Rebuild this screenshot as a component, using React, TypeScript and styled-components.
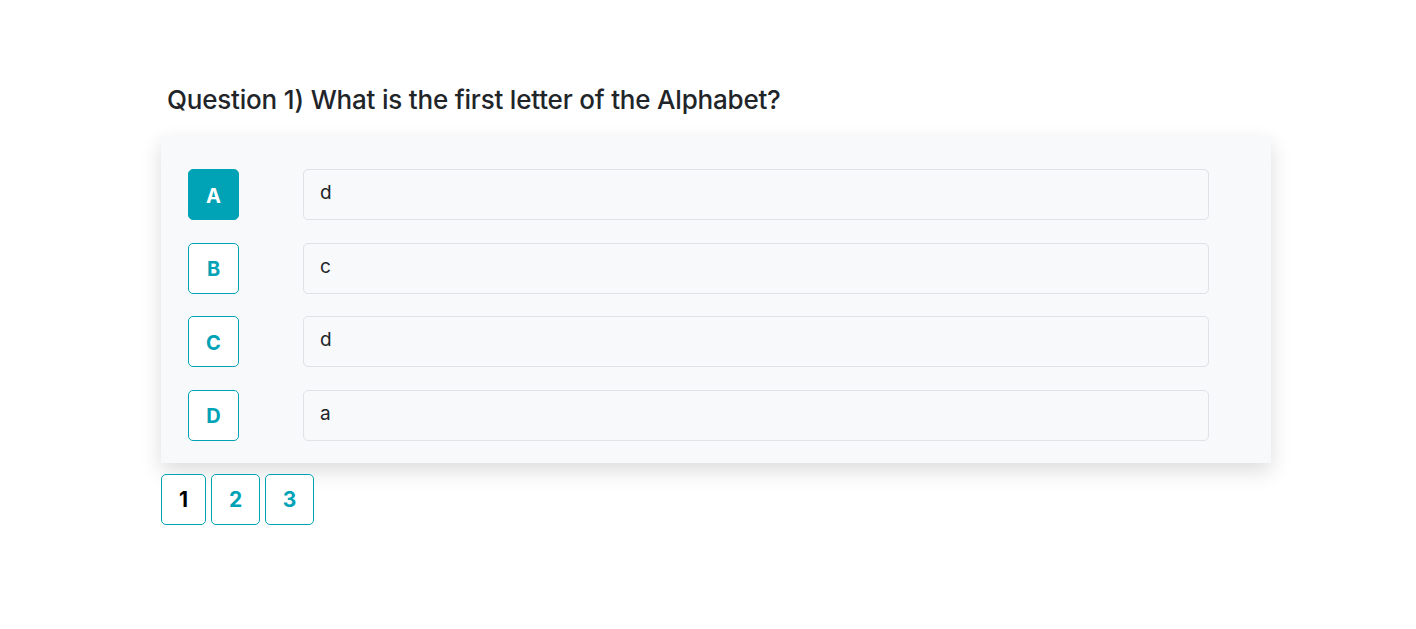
import React, { useState } from "react";
import styled, { createGlobalStyle } from "styled-components";

const Global = createGlobalStyle`
  html, body { margin: 0; padding: 0; background: #ffffff; }
  body { font-family: Inter, "Liberation Sans", Arial, sans-serif; color: #212529; }
  * { box-sizing: border-box; }
`;

const TEAL = "#00a2b6";

const Page = styled.main`
  width: 1110px;
  margin: 0 0 0 161px;
  padding-top: 84px;
`;

const Title = styled.h4`
  margin: 0 0 20px 6px;
  font-size: 26px;
  font-weight: 500;
  line-height: 32px;
  color: #212529;
  letter-spacing: -0.2px;
`;

const Card = styled.section`
  background: #f8f9fa;
  box-shadow: 0 8px 20px rgba(0, 0, 0, 0.14);
  padding: 33px 62px 22px 27px;
  display: flex;
  flex-direction: column;
  gap: 22.5px;
`;

const Row = styled.div`
  display: flex;
  align-items: stretch;
  gap: 64px;
`;

const Letter = styled.button<{ $active?: boolean }>`
  width: 51px;
  height: 51px;
  flex: none;
  border-radius: 5px;
  border: 1px solid ${TEAL};
  background: ${(p) => (p.$active ? TEAL : "#ffffff")};
  color: ${(p) => (p.$active ? "#ffffff" : TEAL)};
  font-family: inherit;
  font-size: 20px;
  font-weight: 700;
  display: flex;
  align-items: center;
  justify-content: center;
  padding: 2px 0 0;
  cursor: pointer;
`;

const Answer = styled.div`
  flex: 1;
  height: 51px;
  border: 1px solid #dfe2e6;
  border-radius: 5px;
  background: #f8f9fa;
  padding: 10px 16px;
  font-size: 19px;
  line-height: 26px;
  color: #212529;
`;

const Pager = styled.nav`
  display: flex;
  gap: 5px;
  margin-top: 11px;
`;

const PageBtn = styled.button<{ $current?: boolean; $w: number }>`
  width: ${(p) => p.$w}px;
  height: 51px;
  border: 1px solid ${TEAL};
  border-radius: 5px;
  background: #ffffff;
  color: ${(p) => (p.$current ? "#000000" : TEAL)};
  font-family: inherit;
  font-size: 21px;
  font-weight: 700;
  padding: 1px 0 0;
  display: flex;
  align-items: center;
  justify-content: center;
  cursor: pointer;
`;

const options = [
  { key: "A", text: "d" },
  { key: "B", text: "c" },
  { key: "C", text: "d" },
  { key: "D", text: "a" },
];

export default function App() {
  const [selected, setSelected] = useState("A");
  const [page, setPage] = useState(1);
  return (
    <>
      <Global />
      <Page>
        <Title>Question 1) What is the first letter of the Alphabet?</Title>
        <Card>
          {options.map((o) => (
            <Row key={o.key}>
              <Letter $active={selected === o.key} onClick={() => setSelected(o.key)}>
                {o.key}
              </Letter>
              <Answer>{o.text}</Answer>
            </Row>
          ))}
        </Card>
        <Pager>
          {[1, 2, 3].map((n) => (
            <PageBtn key={n} $w={n === 1 ? 45 : 49} $current={page === n} onClick={() => setPage(n)}>
              {n}
            </PageBtn>
          ))}
        </Pager>
      </Page>
    </>
  );
}
